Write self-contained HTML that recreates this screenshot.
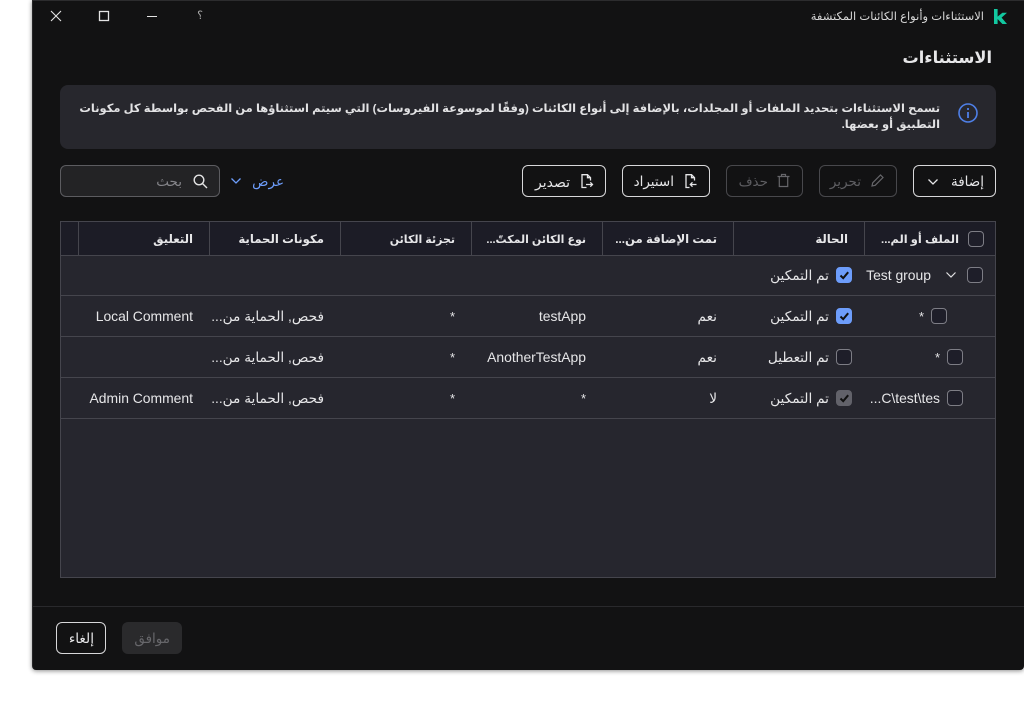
<!DOCTYPE html>
<html lang="ar" dir="ltr">
<head>
<meta charset="utf-8">
<title>الاستثناءات</title>
<style>
html,body{margin:0;padding:0;width:1024px;height:702px;background:#fff;overflow:hidden}
*{box-sizing:border-box}
body{font-family:"Liberation Sans","DejaVu Sans",sans-serif;font-size:12px;color:#e6e6e8}
.a{position:absolute}
#win{position:absolute;left:32px;top:0;width:992px;height:670px;background:#121213;border-top:1px solid #2c2c2e;border-left:1px solid #262628;border-radius:0 0 4px 4px;box-shadow:0 1px 5px rgba(0,0,0,.45)}
.t{position:absolute;margin-top:1px;white-space:nowrap;direction:rtl;line-height:18px;height:18px;unicode-bidi:plaintext;text-align:right}
.h{font-size:11.7px;font-weight:bold;top:230px}
.c{font-size:13.7px}
.l{font-size:13.9px;direction:ltr;margin-top:0}
.s{font-size:13.5px;top:172px}
.btn{position:absolute;top:165px;height:32px;border:1px solid #d8d8da;border-radius:6px}
.dis{border-color:#48484c}
.line{position:absolute;background:#45454d}
.cb{position:absolute;width:16px;height:16px;border:1.5px solid #7d7d85;border-radius:4px;background:#1e1e29}
.cb.on{background:#6d9dfb;border-color:#6d9dfb}
.cb.gr{background:#62626a;border-color:#62626a}
.cb svg{position:absolute;left:1px;top:1px}
svg{position:absolute;overflow:visible}
</style>
</head>
<body>
<div id="win"></div>

<!-- Title bar -->
<svg style="left:50px;top:10px" width="12" height="12" fill="none" stroke="#e4e4e4" stroke-width="1.1"><path d="M1 1L11 11M11 1L1 11"/></svg>
<svg style="left:99px;top:11px" width="10" height="10" fill="none" stroke="#e4e4e4" stroke-width="1.3"><rect x=".5" y=".5" width="9" height="9"/></svg>
<div class="a" style="left:147px;top:16px;width:10px;height:1px;background:#e4e4e4"></div>
<div class="t" style="right:821px;top:6px;font-size:11px;color:#a8a8a8">؟</div>
<div class="t" style="right:40px;top:7px;font-size:11.5px;color:#d8d8d8">الاستثناءات وأنواع الكائنات المكتشفة</div>
<svg style="left:994px;top:9px" width="13" height="15" fill="#12c8a0"><path d="M0 0H3.6V7.6L8.4 3.8H13L7.6 8.6L13 15H8.4L3.6 10V15H0Z"/></svg>

<div class="t" style="right:32px;top:46px;font-size:16.2px;font-weight:bold;height:22px;line-height:22px;color:#e6e6e8">الاستثناءات</div>

<!-- Info box -->
<div class="a" style="left:60px;top:85px;width:936px;height:64px;background:#27272d;border-radius:8px"></div>
<svg style="left:958px;top:103px" width="20" height="20" fill="none" stroke="#4e7fe6" stroke-width="1.6"><circle cx="10" cy="10" r="9"/><path d="M10 9V15M10 5V7" stroke-width="1.8"/></svg>
<div class="t" style="right:84px;top:99px;font-size:11.47px;font-weight:bold;color:#e2e2e4">تسمح الاستثناءات بتحديد الملفات أو المجلدات، بالإضافة إلى أنواع الكائنات (وفقًا لموسوعة الفيروسات) التي سيتم استثناؤها من الفحص بواسطة كل مكونات</div>
<div class="t" style="right:84px;top:115px;font-size:11.47px;font-weight:bold;color:#e2e2e4">التطبيق أو بعضها.</div>

<!-- Toolbar -->
<div class="btn" style="left:913px;width:83px"></div>
<div class="t s" style="right:40px">إضافة</div>
<svg style="left:928px;top:179px" width="10" height="6" fill="none" stroke="#e6e6e8" stroke-width="1.3"><path d="M.5 .5L5 5L9.5 .5"/></svg>

<div class="btn dis" style="left:819px;width:78px"></div>
<div class="t s" style="right:163px;color:#5e5e62">تحرير</div>
<svg style="left:870px;top:173px" width="15" height="15" fill="none" stroke="#66666a" stroke-width="1.2"><path d="M2 13L2.7 9.8L10.5 2L13 4.5L5.2 12.3Z"/></svg>

<div class="btn dis" style="left:726px;width:77px"></div>
<div class="t s" style="right:256px;color:#5e5e62">حذف</div>
<svg style="left:777px;top:173px" width="13" height="15" fill="none" stroke="#66666a" stroke-width="1.2"><path d="M.5 3.5H12.5M4.5 3.5V1.5H8.5V3.5M2.3 3.5V13.5H10.7V3.5"/></svg>

<div class="btn" style="left:622px;width:88px"></div>
<div class="t s" style="right:350px">استيراد</div>
<svg style="left:685px;top:174px" width="12" height="14" fill="none" stroke="#e6e6e8" stroke-width="1.3"><path d="M4.5 13.5H1V.7H6.5L9.5 3.7V6.5M6.5 .7V3.7H9.5"/><path d="M11.5 10.5H5.5M7.5 8.3L5.3 10.5L7.5 12.7"/></svg>

<div class="btn" style="left:522px;width:84px"></div>
<div class="t s" style="right:454px;font-size:14px">تصدير</div>
<svg style="left:581px;top:174px" width="12" height="14" fill="none" stroke="#e6e6e8" stroke-width="1.3"><path d="M5.5 13.5H1V.7H6.5L9.5 3.7V6.5M6.5 .7V3.7H9.5"/><path d="M5 10.5H11.5M9.3 8.3L11.5 10.5L9.3 12.7"/></svg>

<div class="t s" style="right:740px;color:#6d9dfb">عرض</div>
<svg style="left:231px;top:178px" width="10" height="6" fill="none" stroke="#6d9dfb" stroke-width="1.3"><path d="M.5 .5L5 5L9.5 .5"/></svg>

<div class="a" style="left:60px;top:165px;width:160px;height:32px;background:#232325;border:1px solid #5c5c60;border-radius:6px"></div>
<svg style="left:193px;top:174px" width="15" height="15" fill="none" stroke="#e4e4e4" stroke-width="1.4"><circle cx="6" cy="6" r="4.8"/><path d="M9.6 9.6L14 14"/></svg>
<div class="t s" style="right:842px;color:#85858a">بحث</div>

<!-- Table -->
<div class="a" style="left:60px;top:221px;width:936px;height:357px;background:#26262e;border:1px solid #45454d"></div>
<div class="a" style="left:61px;top:222px;width:934px;height:33px;background:#1c1c26"></div>
<div class="line" style="left:61px;top:255px;width:934px;height:1px"></div>
<div class="line" style="left:61px;top:295px;width:934px;height:1px"></div>
<div class="line" style="left:61px;top:336px;width:934px;height:1px"></div>
<div class="line" style="left:61px;top:377px;width:934px;height:1px"></div>
<div class="line" style="left:61px;top:418px;width:934px;height:1px"></div>
<div class="line" style="left:78px;top:222px;width:1px;height:33px"></div>
<div class="line" style="left:209px;top:222px;width:1px;height:33px"></div>
<div class="line" style="left:340px;top:222px;width:1px;height:33px"></div>
<div class="line" style="left:471px;top:222px;width:1px;height:33px"></div>
<div class="line" style="left:602px;top:222px;width:1px;height:33px"></div>
<div class="line" style="left:733px;top:222px;width:1px;height:33px"></div>
<div class="line" style="left:864px;top:222px;width:1px;height:33px"></div>

<!-- Header -->
<div class="cb" style="left:968px;top:231px"></div>
<div class="t h" style="right:65px;font-size:11.4px">الملف أو الم...</div>
<div class="t h" style="right:176px">الحالة</div>
<div class="t h" style="right:307px">تمت الإضافة من...</div>
<div class="t h" style="right:438px;font-size:11px">نوع الكائن المكتّ...</div>
<div class="t h" style="right:569px;font-size:11px">تجزئة الكائن</div>
<div class="t h" style="right:700px">مكونات الحماية</div>
<div class="t h" style="right:831px">التعليق</div>

<!-- Group row -->
<div class="cb" style="left:967px;top:267px"></div>
<svg style="left:946px;top:272px" width="10" height="6" fill="none" stroke="#e0e0e2" stroke-width="1.2"><path d="M.5 .5L5 5L9.5 .5"/></svg>
<div class="t l" style="right:93px;top:266px">Test group</div>
<div class="cb on" style="left:836px;top:267px"><svg width="13" height="13" fill="none" stroke="#111" stroke-width="2"><path d="M2.5 6.5L5.2 9.2L10.2 3.2"/></svg></div>
<div class="t c" style="right:195px;top:266px">تم التمكين</div>

<!-- Row 1 -->
<div class="cb" style="left:931px;top:308px"></div>
<div class="t" style="right:100px;top:307px;font-size:13px">*</div>
<div class="cb on" style="left:836px;top:308px"><svg width="13" height="13" fill="none" stroke="#111" stroke-width="2"><path d="M2.5 6.5L5.2 9.2L10.2 3.2"/></svg></div>
<div class="t c" style="right:195px;top:307px">تم التمكين</div>
<div class="t c" style="right:307px;top:307px">نعم</div>
<div class="t l" style="right:438px;top:307px">testApp</div>
<div class="t" style="right:569px;top:307px;font-size:13px">*</div>
<div class="t c" style="right:700px;top:307px">فحص, الحماية من...</div>
<div class="t l" style="right:831px;top:307px">Local Comment</div>

<!-- Row 2 -->
<div class="cb" style="left:947px;top:349px"></div>
<div class="t" style="right:84px;top:348px;font-size:13px">*</div>
<div class="cb" style="left:836px;top:349px"></div>
<div class="t c" style="right:195px;top:348px">تم التعطيل</div>
<div class="t c" style="right:307px;top:348px">نعم</div>
<div class="t l" style="right:438px;top:348px">AnotherTestApp</div>
<div class="t" style="right:569px;top:348px;font-size:13px">*</div>
<div class="t c" style="right:700px;top:348px">فحص, الحماية من...</div>

<!-- Row 3 -->
<div class="cb" style="left:947px;top:390px"></div>
<div class="t l" style="right:84px;top:389px">...C\test\tes</div>
<div class="cb gr" style="left:836px;top:390px"><svg width="13" height="13" fill="none" stroke="#111" stroke-width="2"><path d="M2.5 6.5L5.2 9.2L10.2 3.2"/></svg></div>
<div class="t c" style="right:195px;top:389px">تم التمكين</div>
<div class="t c" style="right:307px;top:389px">لا</div>
<div class="t" style="right:438px;top:389px;font-size:13px">*</div>
<div class="t" style="right:569px;top:389px;font-size:13px">*</div>
<div class="t c" style="right:700px;top:389px">فحص, الحماية من...</div>
<div class="t l" style="right:831px;top:389px">Admin Comment</div>

<!-- Footer -->
<div class="line" style="left:33px;top:606px;width:991px;height:1px;background:#29292c"></div>
<div class="a" style="left:56px;top:622px;width:50px;height:32px;border:1px solid #d8d8da;border-radius:6px"></div>
<div class="t" style="right:930px;top:629px;font-size:13.7px">إلغاء</div>
<div class="a" style="left:122px;top:622px;width:60px;height:32px;background:#2a2a2c;border-radius:6px"></div>
<div class="t" style="right:854px;top:629px;font-size:13.5px;color:#67676b">موافق</div>
</body>
</html>
